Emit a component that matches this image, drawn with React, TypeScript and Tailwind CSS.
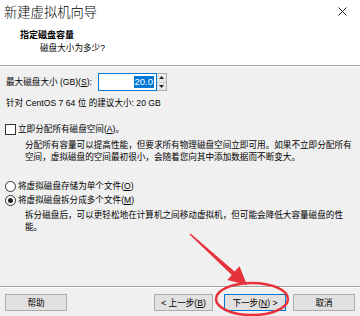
import React from "react";

const U = ({ children }: { children: React.ReactNode }) => (
  <span className="underline underline-offset-[1px]">{children}</span>
);

function Button({
  children,
  primary,
  className,
}: {
  children: React.ReactNode;
  primary?: boolean;
  className?: string;
}) {
  return (
    <div
      className={
        "h-[17px] flex items-center justify-center whitespace-nowrap bg-[#e1e1e1] border text-[8.6px] leading-[12px] text-black " +
        (primary ? "border-[#0078d7] " : "border-[#adadad] ") +
        (className ?? "")
      }
    >
      {children}
    </div>
  );
}

export default function App() {
  return (
    <div className="relative w-[360px] h-[316px] overflow-hidden bg-[#f0f0f0] flex flex-col font-['Liberation_Sans','Noto_Sans_CJK_SC',sans-serif] text-black">
      {/* Header */}
      <div className="h-[65px] bg-white flex flex-col">
        <div className="flex items-start justify-between pl-[4px] pr-[13px] pt-[3px]">
          <div className="text-[13.3px] leading-[17px] font-['Noto_Sans_CJK_SC',sans-serif] font-light">
            新建虚拟机向导
          </div>
          <svg width="9" height="9" viewBox="0 0 9 9" className="mt-[4px]">
            <path d="M0.5 0.5 L8.5 8.5 M8.5 0.5 L0.5 8.5" stroke="#222" strokeWidth="1" />
          </svg>
        </div>
        <div className="pl-[20px] mt-[9px] text-[9px] leading-[12px] font-bold">指定磁盘容量</div>
        <div className="pl-[40px] mt-[1px] text-[8.6px] leading-[12px]">磁盘大小为多少?</div>
      </div>
      <div className="h-px bg-[#a0a0a0]" />
      <div className="h-px bg-white" />

      {/* Body */}
      <div className="flex-1 flex flex-col text-[8.6px] leading-[12px] whitespace-nowrap">
        <div className="mt-[6px] flex items-center h-[18px] pl-[6px]">
          <div className="w-[92px]">
            最大磁盘大小 (GB)(<U>S</U>):
          </div>
          <div className="w-[59px] h-[18px] bg-white border border-[#0078d7] flex items-center justify-end pr-[2px]">
            <span className="bg-[#0078d7] text-white text-[9.5px] leading-[12px] px-[1px]">20.0</span>
          </div>
          <div className="w-[10px] h-[18px] flex flex-col border border-l-0 border-[#adadad] bg-[#f0f0f0]">
            <div className="flex-1 flex items-center justify-center border-b border-[#d0d0d0] bg-[#e8e8e8]">
              <svg width="5" height="3" viewBox="0 0 5 3">
                <path d="M0 3 L2.5 0 L5 3 Z" fill="#222" />
              </svg>
            </div>
            <div className="flex-1 flex items-center justify-center bg-[#e8e8e8]">
              <svg width="5" height="3" viewBox="0 0 5 3">
                <path d="M0 0 L2.5 3 L5 0 Z" fill="#222" />
              </svg>
            </div>
          </div>
        </div>
        <div className="mt-[6px] pl-[6px]">针对 CentOS 7 64 位 的建议大小: 20 GB</div>

        <div className="mt-[14px] flex items-center h-[12px] pl-[5px]">
          <div className="w-[11px] h-[11px] border border-[#333] bg-white" />
          <div className="ml-[2px]">
            立即分配所有磁盘空间(<U>A</U>)。
          </div>
        </div>
        <div className="mt-[4px] pl-[25px] pr-[4px]">
          <div>分配所有容量可以提高性能，但要求所有物理磁盘空间立即可用。如果不立即分配所有</div>
          <div>空间，虚拟磁盘的空间最初很小，会随着您向其中添加数据而不断变大。</div>
        </div>

        <div className="mt-[17px] flex items-center h-[12px] pl-[5px]">
          <div className="w-[11px] h-[11px] rounded-full border border-[#333] bg-white" />
          <div className="ml-[2px]">
            将虚拟磁盘存储为单个文件(<U>O</U>)
          </div>
        </div>
        <div className="mt-[2px] flex items-center h-[12px] pl-[5px]">
          <div className="w-[11px] h-[11px] rounded-full border border-[#333] bg-white flex items-center justify-center">
            <div className="w-[5px] h-[5px] rounded-full bg-[#222]" />
          </div>
          <div className="ml-[2px]">
            将虚拟磁盘拆分成多个文件(<U>M</U>)
          </div>
        </div>
        <div className="mt-[3px] pl-[25px] pr-[4px]">
          <div>拆分磁盘后，可以更轻松地在计算机之间移动虚拟机，但可能会降低大容量磁盘的性</div>
          <div>能。</div>
        </div>
      </div>

      {/* Footer */}
      <div className="h-px bg-[#a0a0a0]" />
      <div className="h-px bg-white" />
      <div className="flex items-center px-[5px] mt-[6px] mb-[5px]">
        <Button className="w-[62px]">帮助</Button>
        <div className="flex-1" />
        <Button className="w-[59px]">
          &lt; 上一步(<U>B</U>)
        </Button>
        <Button primary className="w-[62px] ml-[11px]">
          下一步(<U>N</U>) &gt;
        </Button>
        <Button className="w-[62px] ml-[7px]">取消</Button>
      </div>

      {/* Red annotation overlay */}
      <svg
        className="absolute inset-0 pointer-events-none"
        width="360"
        height="316"
        viewBox="0 0 360 316"
      >
        <polygon
          points="190.5,233.4 234.6,271.6 239.5,266.3 247,285 227.3,280.1 231.8,275.1 189.5,234.6"
          fill="#e5323b"
        />
        <ellipse cx="252" cy="299" rx="36" ry="16" fill="none" stroke="#e5323b" strokeWidth="2.5" />
      </svg>
    </div>
  );
}
